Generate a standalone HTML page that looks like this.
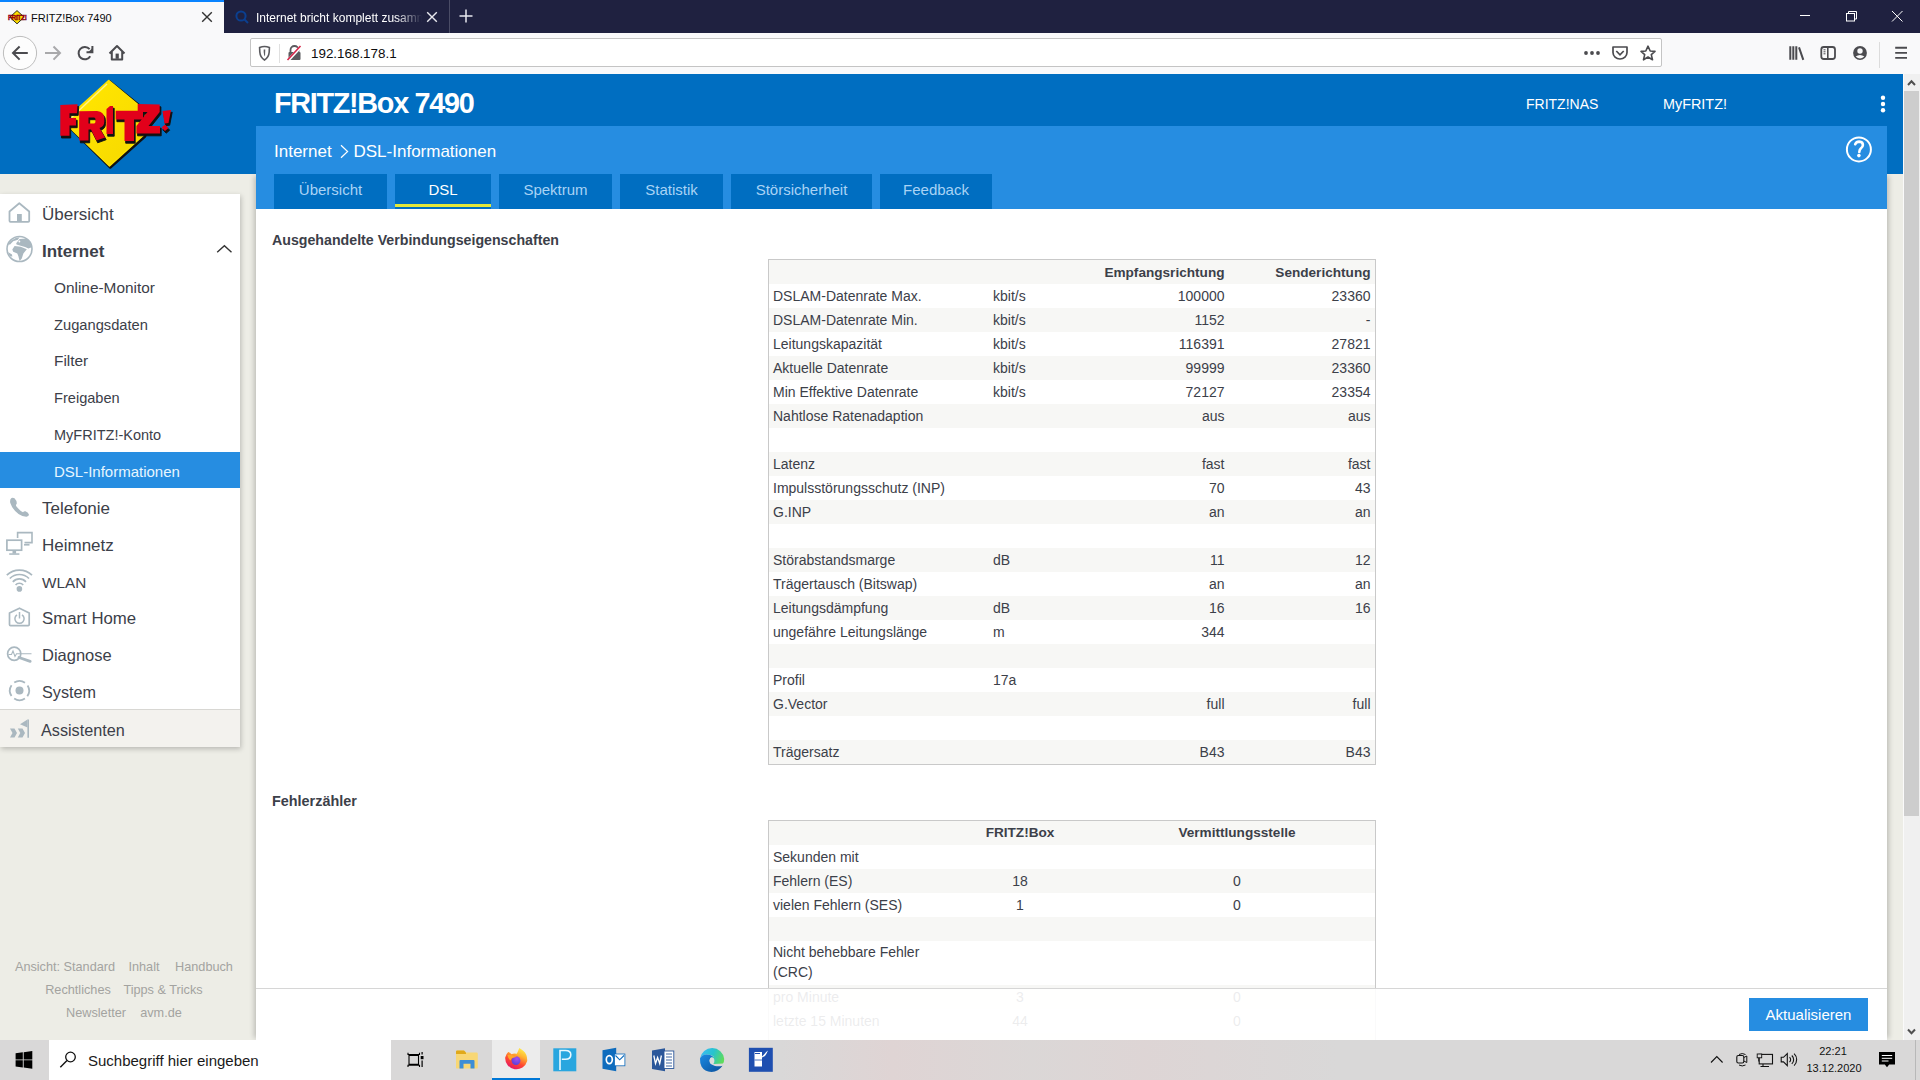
<!DOCTYPE html>
<html><head><meta charset="utf-8"><title>FRITZ!Box 7490</title>
<style>
html,body{margin:0;padding:0;width:1920px;height:1080px;overflow:hidden;background:#fff;font-family:"Liberation Sans", sans-serif;}
div{box-sizing:content-box}
</style></head><body>
<div style="position:absolute;left:0px;top:0px;width:1920px;height:33px;background:#1f2140"></div><div style="position:absolute;left:0px;top:0px;width:224px;height:33px;background:#f9f9fa"></div><div style="position:absolute;left:0px;top:0px;width:224px;height:2px;background:#0a84ff"></div><div style="position:absolute;left:31px;top:12.69px;font-size:11px;line-height:11px;height:11px;color:#0c0c0d;font-weight:400;white-space:nowrap;">FRITZ!Box 7490</div><div style="position:absolute;left:256px;top:11.84px;width:166px;height:14px;overflow:hidden;font-size:12px;line-height:12px;color:#fff;white-space:nowrap;-webkit-mask-image:linear-gradient(to right,#000 140px,transparent 166px)">Internet bricht komplett zusammen</div><div style="position:absolute;left:0px;top:33px;width:1920px;height:41px;background:#f9f9fa"></div><div style="position:absolute;left:250px;top:38px;width:1412px;height:29px;background:#fff;border:1px solid #c4c4c4;border-radius:2px;box-sizing:border-box"></div><div style="position:absolute;left:311px;top:47.46px;font-size:13.4px;line-height:13.4px;height:13.4px;color:#0c0c0d;font-weight:400;white-space:nowrap;">192.168.178.1</div><div style="position:absolute;left:0px;top:74px;width:1903px;height:966px;background:#edede6"></div><div style="position:absolute;left:0px;top:74px;width:1903px;height:100px;background:#006ec1"></div><div style="position:absolute;left:256px;top:174px;width:1631px;height:866px;background:#fff;box-shadow:4px 0 5px -2px rgba(0,0,0,0.2),-4px 0 5px -2px rgba(0,0,0,0.2)"></div><div style="position:absolute;left:256px;top:126px;width:1631px;height:83px;background:#268de1"></div><div style="position:absolute;left:274px;top:89.42px;font-size:28.8px;line-height:28.8px;height:28.8px;color:#fff;font-weight:700;white-space:nowrap;letter-spacing:-1.3px">FRITZ!Box 7490</div><div style="position:absolute;left:274px;top:142.61px;font-size:17px;line-height:17px;height:17px;color:#fff;font-weight:400;white-space:nowrap;">Internet</div><svg style="position:absolute;left:338px;top:142px;" width="14" height="20" viewBox="338 142 14 20"><path d="M341 145.2 L347.6 151.5 L341 157.8" fill="none" stroke="#fff" stroke-width="1.2"/></svg><div style="position:absolute;left:353.5px;top:142.61px;font-size:17px;line-height:17px;height:17px;color:#fff;font-weight:400;white-space:nowrap;">DSL-Informationen</div><div style="position:absolute;left:1526px;top:97.15px;font-size:14px;line-height:14px;height:14px;color:#fff;font-weight:400;white-space:nowrap;">FRITZ!NAS</div><div style="position:absolute;left:1663px;top:96.81px;font-size:14.4px;line-height:14.4px;height:14.4px;color:#fff;font-weight:400;white-space:nowrap;">MyFRITZ!</div><div style="position:absolute;left:274px;top:174px;width:113px;height:35px;background:#006ec1"></div><div style="position:absolute;left:274.0px;width:113px;text-align:center;top:182.30px;font-size:15px;line-height:15px;height:15px;color:#a9d3f5;font-weight:400;white-space:nowrap;">Übersicht</div><div style="position:absolute;left:395px;top:174px;width:96px;height:35px;background:#006ec1"></div><div style="position:absolute;left:395.0px;width:96px;text-align:center;top:182.30px;font-size:15px;line-height:15px;height:15px;color:#fff;font-weight:400;white-space:nowrap;">DSL</div><div style="position:absolute;left:499px;top:174px;width:113px;height:35px;background:#006ec1"></div><div style="position:absolute;left:499.0px;width:113px;text-align:center;top:182.30px;font-size:15px;line-height:15px;height:15px;color:#a9d3f5;font-weight:400;white-space:nowrap;">Spektrum</div><div style="position:absolute;left:620px;top:174px;width:103px;height:35px;background:#006ec1"></div><div style="position:absolute;left:620.0px;width:103px;text-align:center;top:182.30px;font-size:15px;line-height:15px;height:15px;color:#a9d3f5;font-weight:400;white-space:nowrap;">Statistik</div><div style="position:absolute;left:731px;top:174px;width:141px;height:35px;background:#006ec1"></div><div style="position:absolute;left:731.0px;width:141px;text-align:center;top:182.30px;font-size:15px;line-height:15px;height:15px;color:#a9d3f5;font-weight:400;white-space:nowrap;">Störsicherheit</div><div style="position:absolute;left:880px;top:174px;width:112px;height:35px;background:#006ec1"></div><div style="position:absolute;left:880.0px;width:112px;text-align:center;top:182.30px;font-size:15px;line-height:15px;height:15px;color:#a9d3f5;font-weight:400;white-space:nowrap;">Feedback</div><div style="position:absolute;left:395px;top:204px;width:96px;height:3px;background:#e2e83a"></div><div style="position:absolute;left:0px;top:194px;width:240px;height:553px;background:#fff;box-shadow:1px 2px 5px rgba(0,0,0,0.22)"></div><div style="position:absolute;left:0px;top:709px;width:240px;height:38px;background:#f3f2ee;border-top:1px solid #d8d7d3;box-sizing:border-box"></div><div style="position:absolute;left:0px;top:452px;width:240px;height:36px;background:#268de1"></div><div style="position:absolute;left:42px;top:205.61px;font-size:17px;line-height:17px;height:17px;color:#3c4049;font-weight:400;white-space:nowrap;">Übersicht</div><div style="position:absolute;left:42px;top:242.61px;font-size:17px;line-height:17px;height:17px;color:#3c4049;font-weight:700;white-space:nowrap;">Internet</div><div style="position:absolute;left:54px;top:279.96px;font-size:15.4px;line-height:15.4px;height:15.4px;color:#3c4049;font-weight:400;white-space:nowrap;">Online-Monitor</div><div style="position:absolute;left:54px;top:317.56px;font-size:14.7px;line-height:14.7px;height:14.7px;color:#3c4049;font-weight:400;white-space:nowrap;">Zugangsdaten</div><div style="position:absolute;left:54px;top:352.96px;font-size:15.4px;line-height:15.4px;height:15.4px;color:#3c4049;font-weight:400;white-space:nowrap;">Filter</div><div style="position:absolute;left:54px;top:390.64px;font-size:14.6px;line-height:14.6px;height:14.6px;color:#3c4049;font-weight:400;white-space:nowrap;">Freigaben</div><div style="position:absolute;left:54px;top:427.73px;font-size:14.5px;line-height:14.5px;height:14.5px;color:#3c4049;font-weight:400;white-space:nowrap;">MyFRITZ!-Konto</div><div style="position:absolute;left:54px;top:464.30px;font-size:15px;line-height:15px;height:15px;color:#e6f6ff;font-weight:400;white-space:nowrap;">DSL-Informationen</div><div style="position:absolute;left:42px;top:499.61px;font-size:17px;line-height:17px;height:17px;color:#3c4049;font-weight:400;white-space:nowrap;">Telefonie</div><div style="position:absolute;left:42px;top:536.61px;font-size:17px;line-height:17px;height:17px;color:#3c4049;font-weight:400;white-space:nowrap;">Heimnetz</div><div style="position:absolute;left:42px;top:575.05px;font-size:15.3px;line-height:15.3px;height:15.3px;color:#3c4049;font-weight:400;white-space:nowrap;">WLAN</div><div style="position:absolute;left:42px;top:610.78px;font-size:16.8px;line-height:16.8px;height:16.8px;color:#3c4049;font-weight:400;white-space:nowrap;">Smart Home</div><div style="position:absolute;left:42px;top:647.03px;font-size:16.5px;line-height:16.5px;height:16.5px;color:#3c4049;font-weight:400;white-space:nowrap;">Diagnose</div><div style="position:absolute;left:42px;top:684.29px;font-size:16.2px;line-height:16.2px;height:16.2px;color:#3c4049;font-weight:400;white-space:nowrap;">System</div><div style="position:absolute;left:41px;top:722.29px;font-size:16.2px;line-height:16.2px;height:16.2px;color:#3c4049;font-weight:400;white-space:nowrap;">Assistenten</div><div style="position:absolute;left:272px;top:232.98px;font-size:14.2px;line-height:14.2px;height:14.2px;color:#3c4049;font-weight:700;white-space:nowrap;">Ausgehandelte Verbindungseigenschaften</div><div style="position:absolute;left:272px;top:793.81px;font-size:14.4px;line-height:14.4px;height:14.4px;color:#3c4049;font-weight:700;white-space:nowrap;">Fehlerzähler</div><div style="position:absolute;left:768px;top:259px;width:608px;height:506px;border:1px solid #c9c9c9;box-sizing:border-box"></div><div style="position:absolute;left:769px;top:260px;width:606px;height:24px;background:#f7f7f5"></div><div style="position:absolute;right:695.5px;text-align:right;top:266.29px;font-size:13.6px;line-height:13.6px;height:13.6px;color:#3c4049;font-weight:700;white-space:nowrap;">Empfangsrichtung</div><div style="position:absolute;right:549.5px;text-align:right;top:266.29px;font-size:13.6px;line-height:13.6px;height:13.6px;color:#3c4049;font-weight:700;white-space:nowrap;">Senderichtung</div><div style="position:absolute;left:773px;top:289.15px;font-size:14px;line-height:14px;height:14px;color:#3c4049;font-weight:400;white-space:nowrap;">DSLAM-Datenrate Max.</div><div style="position:absolute;left:993px;top:289.15px;font-size:14px;line-height:14px;height:14px;color:#3c4049;font-weight:400;white-space:nowrap;">kbit/s</div><div style="position:absolute;right:695.5px;text-align:right;top:289.15px;font-size:14px;line-height:14px;height:14px;color:#3c4049;font-weight:400;white-space:nowrap;">100000</div><div style="position:absolute;right:549.5px;text-align:right;top:289.15px;font-size:14px;line-height:14px;height:14px;color:#3c4049;font-weight:400;white-space:nowrap;">23360</div><div style="position:absolute;left:769px;top:308px;width:606px;height:24px;background:#f7f7f5"></div><div style="position:absolute;left:773px;top:313.15px;font-size:14px;line-height:14px;height:14px;color:#3c4049;font-weight:400;white-space:nowrap;">DSLAM-Datenrate Min.</div><div style="position:absolute;left:993px;top:313.15px;font-size:14px;line-height:14px;height:14px;color:#3c4049;font-weight:400;white-space:nowrap;">kbit/s</div><div style="position:absolute;right:695.5px;text-align:right;top:313.15px;font-size:14px;line-height:14px;height:14px;color:#3c4049;font-weight:400;white-space:nowrap;">1152</div><div style="position:absolute;right:549.5px;text-align:right;top:313.15px;font-size:14px;line-height:14px;height:14px;color:#3c4049;font-weight:400;white-space:nowrap;">-</div><div style="position:absolute;left:773px;top:337.15px;font-size:14px;line-height:14px;height:14px;color:#3c4049;font-weight:400;white-space:nowrap;">Leitungskapazität</div><div style="position:absolute;left:993px;top:337.15px;font-size:14px;line-height:14px;height:14px;color:#3c4049;font-weight:400;white-space:nowrap;">kbit/s</div><div style="position:absolute;right:695.5px;text-align:right;top:337.15px;font-size:14px;line-height:14px;height:14px;color:#3c4049;font-weight:400;white-space:nowrap;">116391</div><div style="position:absolute;right:549.5px;text-align:right;top:337.15px;font-size:14px;line-height:14px;height:14px;color:#3c4049;font-weight:400;white-space:nowrap;">27821</div><div style="position:absolute;left:769px;top:356px;width:606px;height:24px;background:#f7f7f5"></div><div style="position:absolute;left:773px;top:361.15px;font-size:14px;line-height:14px;height:14px;color:#3c4049;font-weight:400;white-space:nowrap;">Aktuelle Datenrate</div><div style="position:absolute;left:993px;top:361.15px;font-size:14px;line-height:14px;height:14px;color:#3c4049;font-weight:400;white-space:nowrap;">kbit/s</div><div style="position:absolute;right:695.5px;text-align:right;top:361.15px;font-size:14px;line-height:14px;height:14px;color:#3c4049;font-weight:400;white-space:nowrap;">99999</div><div style="position:absolute;right:549.5px;text-align:right;top:361.15px;font-size:14px;line-height:14px;height:14px;color:#3c4049;font-weight:400;white-space:nowrap;">23360</div><div style="position:absolute;left:773px;top:385.15px;font-size:14px;line-height:14px;height:14px;color:#3c4049;font-weight:400;white-space:nowrap;">Min Effektive Datenrate</div><div style="position:absolute;left:993px;top:385.15px;font-size:14px;line-height:14px;height:14px;color:#3c4049;font-weight:400;white-space:nowrap;">kbit/s</div><div style="position:absolute;right:695.5px;text-align:right;top:385.15px;font-size:14px;line-height:14px;height:14px;color:#3c4049;font-weight:400;white-space:nowrap;">72127</div><div style="position:absolute;right:549.5px;text-align:right;top:385.15px;font-size:14px;line-height:14px;height:14px;color:#3c4049;font-weight:400;white-space:nowrap;">23354</div><div style="position:absolute;left:769px;top:404px;width:606px;height:24px;background:#f7f7f5"></div><div style="position:absolute;left:773px;top:409.15px;font-size:14px;line-height:14px;height:14px;color:#3c4049;font-weight:400;white-space:nowrap;">Nahtlose Ratenadaption</div><div style="position:absolute;left:993px;top:409.15px;font-size:14px;line-height:14px;height:14px;color:#3c4049;font-weight:400;white-space:nowrap;"></div><div style="position:absolute;right:695.5px;text-align:right;top:409.15px;font-size:14px;line-height:14px;height:14px;color:#3c4049;font-weight:400;white-space:nowrap;">aus</div><div style="position:absolute;right:549.5px;text-align:right;top:409.15px;font-size:14px;line-height:14px;height:14px;color:#3c4049;font-weight:400;white-space:nowrap;">aus</div><div style="position:absolute;left:773px;top:433.15px;font-size:14px;line-height:14px;height:14px;color:#3c4049;font-weight:400;white-space:nowrap;"></div><div style="position:absolute;left:993px;top:433.15px;font-size:14px;line-height:14px;height:14px;color:#3c4049;font-weight:400;white-space:nowrap;"></div><div style="position:absolute;right:695.5px;text-align:right;top:433.15px;font-size:14px;line-height:14px;height:14px;color:#3c4049;font-weight:400;white-space:nowrap;"></div><div style="position:absolute;right:549.5px;text-align:right;top:433.15px;font-size:14px;line-height:14px;height:14px;color:#3c4049;font-weight:400;white-space:nowrap;"></div><div style="position:absolute;left:769px;top:452px;width:606px;height:24px;background:#f7f7f5"></div><div style="position:absolute;left:773px;top:457.15px;font-size:14px;line-height:14px;height:14px;color:#3c4049;font-weight:400;white-space:nowrap;">Latenz</div><div style="position:absolute;left:993px;top:457.15px;font-size:14px;line-height:14px;height:14px;color:#3c4049;font-weight:400;white-space:nowrap;"></div><div style="position:absolute;right:695.5px;text-align:right;top:457.15px;font-size:14px;line-height:14px;height:14px;color:#3c4049;font-weight:400;white-space:nowrap;">fast</div><div style="position:absolute;right:549.5px;text-align:right;top:457.15px;font-size:14px;line-height:14px;height:14px;color:#3c4049;font-weight:400;white-space:nowrap;">fast</div><div style="position:absolute;left:773px;top:481.15px;font-size:14px;line-height:14px;height:14px;color:#3c4049;font-weight:400;white-space:nowrap;">Impulsstörungsschutz (INP)</div><div style="position:absolute;left:993px;top:481.15px;font-size:14px;line-height:14px;height:14px;color:#3c4049;font-weight:400;white-space:nowrap;"></div><div style="position:absolute;right:695.5px;text-align:right;top:481.15px;font-size:14px;line-height:14px;height:14px;color:#3c4049;font-weight:400;white-space:nowrap;">70</div><div style="position:absolute;right:549.5px;text-align:right;top:481.15px;font-size:14px;line-height:14px;height:14px;color:#3c4049;font-weight:400;white-space:nowrap;">43</div><div style="position:absolute;left:769px;top:500px;width:606px;height:24px;background:#f7f7f5"></div><div style="position:absolute;left:773px;top:505.15px;font-size:14px;line-height:14px;height:14px;color:#3c4049;font-weight:400;white-space:nowrap;">G.INP</div><div style="position:absolute;left:993px;top:505.15px;font-size:14px;line-height:14px;height:14px;color:#3c4049;font-weight:400;white-space:nowrap;"></div><div style="position:absolute;right:695.5px;text-align:right;top:505.15px;font-size:14px;line-height:14px;height:14px;color:#3c4049;font-weight:400;white-space:nowrap;">an</div><div style="position:absolute;right:549.5px;text-align:right;top:505.15px;font-size:14px;line-height:14px;height:14px;color:#3c4049;font-weight:400;white-space:nowrap;">an</div><div style="position:absolute;left:773px;top:529.15px;font-size:14px;line-height:14px;height:14px;color:#3c4049;font-weight:400;white-space:nowrap;"></div><div style="position:absolute;left:993px;top:529.15px;font-size:14px;line-height:14px;height:14px;color:#3c4049;font-weight:400;white-space:nowrap;"></div><div style="position:absolute;right:695.5px;text-align:right;top:529.15px;font-size:14px;line-height:14px;height:14px;color:#3c4049;font-weight:400;white-space:nowrap;"></div><div style="position:absolute;right:549.5px;text-align:right;top:529.15px;font-size:14px;line-height:14px;height:14px;color:#3c4049;font-weight:400;white-space:nowrap;"></div><div style="position:absolute;left:769px;top:548px;width:606px;height:24px;background:#f7f7f5"></div><div style="position:absolute;left:773px;top:553.15px;font-size:14px;line-height:14px;height:14px;color:#3c4049;font-weight:400;white-space:nowrap;">Störabstandsmarge</div><div style="position:absolute;left:993px;top:553.15px;font-size:14px;line-height:14px;height:14px;color:#3c4049;font-weight:400;white-space:nowrap;">dB</div><div style="position:absolute;right:695.5px;text-align:right;top:553.15px;font-size:14px;line-height:14px;height:14px;color:#3c4049;font-weight:400;white-space:nowrap;">11</div><div style="position:absolute;right:549.5px;text-align:right;top:553.15px;font-size:14px;line-height:14px;height:14px;color:#3c4049;font-weight:400;white-space:nowrap;">12</div><div style="position:absolute;left:773px;top:577.15px;font-size:14px;line-height:14px;height:14px;color:#3c4049;font-weight:400;white-space:nowrap;">Trägertausch (Bitswap)</div><div style="position:absolute;left:993px;top:577.15px;font-size:14px;line-height:14px;height:14px;color:#3c4049;font-weight:400;white-space:nowrap;"></div><div style="position:absolute;right:695.5px;text-align:right;top:577.15px;font-size:14px;line-height:14px;height:14px;color:#3c4049;font-weight:400;white-space:nowrap;">an</div><div style="position:absolute;right:549.5px;text-align:right;top:577.15px;font-size:14px;line-height:14px;height:14px;color:#3c4049;font-weight:400;white-space:nowrap;">an</div><div style="position:absolute;left:769px;top:596px;width:606px;height:24px;background:#f7f7f5"></div><div style="position:absolute;left:773px;top:601.15px;font-size:14px;line-height:14px;height:14px;color:#3c4049;font-weight:400;white-space:nowrap;">Leitungsdämpfung</div><div style="position:absolute;left:993px;top:601.15px;font-size:14px;line-height:14px;height:14px;color:#3c4049;font-weight:400;white-space:nowrap;">dB</div><div style="position:absolute;right:695.5px;text-align:right;top:601.15px;font-size:14px;line-height:14px;height:14px;color:#3c4049;font-weight:400;white-space:nowrap;">16</div><div style="position:absolute;right:549.5px;text-align:right;top:601.15px;font-size:14px;line-height:14px;height:14px;color:#3c4049;font-weight:400;white-space:nowrap;">16</div><div style="position:absolute;left:773px;top:625.15px;font-size:14px;line-height:14px;height:14px;color:#3c4049;font-weight:400;white-space:nowrap;">ungefähre Leitungslänge</div><div style="position:absolute;left:993px;top:625.15px;font-size:14px;line-height:14px;height:14px;color:#3c4049;font-weight:400;white-space:nowrap;">m</div><div style="position:absolute;right:695.5px;text-align:right;top:625.15px;font-size:14px;line-height:14px;height:14px;color:#3c4049;font-weight:400;white-space:nowrap;">344</div><div style="position:absolute;right:549.5px;text-align:right;top:625.15px;font-size:14px;line-height:14px;height:14px;color:#3c4049;font-weight:400;white-space:nowrap;"></div><div style="position:absolute;left:769px;top:644px;width:606px;height:24px;background:#f7f7f5"></div><div style="position:absolute;left:773px;top:649.15px;font-size:14px;line-height:14px;height:14px;color:#3c4049;font-weight:400;white-space:nowrap;"></div><div style="position:absolute;left:993px;top:649.15px;font-size:14px;line-height:14px;height:14px;color:#3c4049;font-weight:400;white-space:nowrap;"></div><div style="position:absolute;right:695.5px;text-align:right;top:649.15px;font-size:14px;line-height:14px;height:14px;color:#3c4049;font-weight:400;white-space:nowrap;"></div><div style="position:absolute;right:549.5px;text-align:right;top:649.15px;font-size:14px;line-height:14px;height:14px;color:#3c4049;font-weight:400;white-space:nowrap;"></div><div style="position:absolute;left:773px;top:673.15px;font-size:14px;line-height:14px;height:14px;color:#3c4049;font-weight:400;white-space:nowrap;">Profil</div><div style="position:absolute;left:993px;top:673.15px;font-size:14px;line-height:14px;height:14px;color:#3c4049;font-weight:400;white-space:nowrap;">17a</div><div style="position:absolute;right:695.5px;text-align:right;top:673.15px;font-size:14px;line-height:14px;height:14px;color:#3c4049;font-weight:400;white-space:nowrap;"></div><div style="position:absolute;right:549.5px;text-align:right;top:673.15px;font-size:14px;line-height:14px;height:14px;color:#3c4049;font-weight:400;white-space:nowrap;"></div><div style="position:absolute;left:769px;top:692px;width:606px;height:24px;background:#f7f7f5"></div><div style="position:absolute;left:773px;top:697.15px;font-size:14px;line-height:14px;height:14px;color:#3c4049;font-weight:400;white-space:nowrap;">G.Vector</div><div style="position:absolute;left:993px;top:697.15px;font-size:14px;line-height:14px;height:14px;color:#3c4049;font-weight:400;white-space:nowrap;"></div><div style="position:absolute;right:695.5px;text-align:right;top:697.15px;font-size:14px;line-height:14px;height:14px;color:#3c4049;font-weight:400;white-space:nowrap;">full</div><div style="position:absolute;right:549.5px;text-align:right;top:697.15px;font-size:14px;line-height:14px;height:14px;color:#3c4049;font-weight:400;white-space:nowrap;">full</div><div style="position:absolute;left:773px;top:721.15px;font-size:14px;line-height:14px;height:14px;color:#3c4049;font-weight:400;white-space:nowrap;"></div><div style="position:absolute;left:993px;top:721.15px;font-size:14px;line-height:14px;height:14px;color:#3c4049;font-weight:400;white-space:nowrap;"></div><div style="position:absolute;right:695.5px;text-align:right;top:721.15px;font-size:14px;line-height:14px;height:14px;color:#3c4049;font-weight:400;white-space:nowrap;"></div><div style="position:absolute;right:549.5px;text-align:right;top:721.15px;font-size:14px;line-height:14px;height:14px;color:#3c4049;font-weight:400;white-space:nowrap;"></div><div style="position:absolute;left:769px;top:740px;width:606px;height:24px;background:#f7f7f5"></div><div style="position:absolute;left:773px;top:745.15px;font-size:14px;line-height:14px;height:14px;color:#3c4049;font-weight:400;white-space:nowrap;">Trägersatz</div><div style="position:absolute;left:993px;top:745.15px;font-size:14px;line-height:14px;height:14px;color:#3c4049;font-weight:400;white-space:nowrap;"></div><div style="position:absolute;right:695.5px;text-align:right;top:745.15px;font-size:14px;line-height:14px;height:14px;color:#3c4049;font-weight:400;white-space:nowrap;">B43</div><div style="position:absolute;right:549.5px;text-align:right;top:745.15px;font-size:14px;line-height:14px;height:14px;color:#3c4049;font-weight:400;white-space:nowrap;">B43</div><div style="position:absolute;left:768px;top:820px;width:608px;height:240px;border:1px solid #c9c9c9;box-sizing:border-box"></div><div style="position:absolute;left:769px;top:821px;width:606px;height:24px;background:#f7f7f5"></div><div style="position:absolute;left:920.0px;width:200px;text-align:center;top:826.49px;font-size:13.6px;line-height:13.6px;height:13.6px;color:#3c4049;font-weight:700;white-space:nowrap;">FRITZ!Box</div><div style="position:absolute;left:1137.0px;width:200px;text-align:center;top:826.49px;font-size:13.6px;line-height:13.6px;height:13.6px;color:#3c4049;font-weight:700;white-space:nowrap;">Vermittlungsstelle</div><div style="position:absolute;left:773px;top:850.15px;font-size:14px;line-height:14px;height:14px;color:#3c4049;font-weight:400;white-space:nowrap;">Sekunden mit</div><div style="position:absolute;left:970.0px;width:100px;text-align:center;top:850.15px;font-size:14px;line-height:14px;height:14px;color:#3c4049;font-weight:400;white-space:nowrap;"></div><div style="position:absolute;left:1187.0px;width:100px;text-align:center;top:850.15px;font-size:14px;line-height:14px;height:14px;color:#3c4049;font-weight:400;white-space:nowrap;"></div><div style="position:absolute;left:769px;top:869px;width:606px;height:24px;background:#f7f7f5"></div><div style="position:absolute;left:773px;top:874.15px;font-size:14px;line-height:14px;height:14px;color:#3c4049;font-weight:400;white-space:nowrap;">Fehlern (ES)</div><div style="position:absolute;left:970.0px;width:100px;text-align:center;top:874.15px;font-size:14px;line-height:14px;height:14px;color:#3c4049;font-weight:400;white-space:nowrap;">18</div><div style="position:absolute;left:1187.0px;width:100px;text-align:center;top:874.15px;font-size:14px;line-height:14px;height:14px;color:#3c4049;font-weight:400;white-space:nowrap;">0</div><div style="position:absolute;left:773px;top:898.15px;font-size:14px;line-height:14px;height:14px;color:#3c4049;font-weight:400;white-space:nowrap;">vielen Fehlern (SES)</div><div style="position:absolute;left:970.0px;width:100px;text-align:center;top:898.15px;font-size:14px;line-height:14px;height:14px;color:#3c4049;font-weight:400;white-space:nowrap;">1</div><div style="position:absolute;left:1187.0px;width:100px;text-align:center;top:898.15px;font-size:14px;line-height:14px;height:14px;color:#3c4049;font-weight:400;white-space:nowrap;">0</div><div style="position:absolute;left:769px;top:917px;width:606px;height:24px;background:#f7f7f5"></div><div style="position:absolute;left:773px;top:922.15px;font-size:14px;line-height:14px;height:14px;color:#3c4049;font-weight:400;white-space:nowrap;"></div><div style="position:absolute;left:970.0px;width:100px;text-align:center;top:922.15px;font-size:14px;line-height:14px;height:14px;color:#3c4049;font-weight:400;white-space:nowrap;"></div><div style="position:absolute;left:1187.0px;width:100px;text-align:center;top:922.15px;font-size:14px;line-height:14px;height:14px;color:#3c4049;font-weight:400;white-space:nowrap;"></div><div style="position:absolute;left:773px;top:942.2px;font-size:14px;line-height:20px;color:#3c4049">Nicht behebbare Fehler<br>(CRC)</div><div style="position:absolute;left:970.0px;width:100px;text-align:center;top:946.15px;font-size:14px;line-height:14px;height:14px;color:#3c4049;font-weight:400;white-space:nowrap;"></div><div style="position:absolute;left:1187.0px;width:100px;text-align:center;top:946.15px;font-size:14px;line-height:14px;height:14px;color:#3c4049;font-weight:400;white-space:nowrap;"></div><div style="position:absolute;left:769px;top:985px;width:606px;height:24px;background:#f7f7f5"></div><div style="position:absolute;left:773px;top:990.15px;font-size:14px;line-height:14px;height:14px;color:#3c4049;font-weight:400;white-space:nowrap;">pro Minute</div><div style="position:absolute;left:970.0px;width:100px;text-align:center;top:990.15px;font-size:14px;line-height:14px;height:14px;color:#3c4049;font-weight:400;white-space:nowrap;">3</div><div style="position:absolute;left:1187.0px;width:100px;text-align:center;top:990.15px;font-size:14px;line-height:14px;height:14px;color:#3c4049;font-weight:400;white-space:nowrap;">0</div><div style="position:absolute;left:773px;top:1014.15px;font-size:14px;line-height:14px;height:14px;color:#3c4049;font-weight:400;white-space:nowrap;">letzte 15 Minuten</div><div style="position:absolute;left:970.0px;width:100px;text-align:center;top:1014.15px;font-size:14px;line-height:14px;height:14px;color:#3c4049;font-weight:400;white-space:nowrap;">44</div><div style="position:absolute;left:1187.0px;width:100px;text-align:center;top:1014.15px;font-size:14px;line-height:14px;height:14px;color:#3c4049;font-weight:400;white-space:nowrap;">0</div><div style="position:absolute;left:769px;top:1033px;width:606px;height:24px;background:#f7f7f5"></div><div style="position:absolute;left:773px;top:1038.15px;font-size:14px;line-height:14px;height:14px;color:#3c4049;font-weight:400;white-space:nowrap;"></div><div style="position:absolute;left:970.0px;width:100px;text-align:center;top:1038.15px;font-size:14px;line-height:14px;height:14px;color:#3c4049;font-weight:400;white-space:nowrap;"></div><div style="position:absolute;left:1187.0px;width:100px;text-align:center;top:1038.15px;font-size:14px;line-height:14px;height:14px;color:#3c4049;font-weight:400;white-space:nowrap;"></div><div style="position:absolute;left:256px;top:988px;width:1631px;height:52px;background:rgba(255,255,255,0.9);border-top:1px solid #d6d6d6;box-sizing:border-box"></div><div style="position:absolute;left:1749px;top:998px;width:119px;height:33px;background:#268de1"></div><div style="position:absolute;left:1749.0px;width:119px;text-align:center;top:1007.30px;font-size:15px;line-height:15px;height:15px;color:#fff;font-weight:400;white-space:nowrap;">Aktualisieren</div><div style="position:absolute;left:-35.0px;width:200px;text-align:center;top:960.95px;font-size:12.7px;line-height:12.7px;height:12.7px;color:#a3a3a0;font-weight:400;white-space:nowrap;">Ansicht: Standard</div><div style="position:absolute;left:104.0px;width:80px;text-align:center;top:960.95px;font-size:12.7px;line-height:12.7px;height:12.7px;color:#a3a3a0;font-weight:400;white-space:nowrap;">Inhalt</div><div style="position:absolute;left:154.0px;width:100px;text-align:center;top:960.95px;font-size:12.7px;line-height:12.7px;height:12.7px;color:#a3a3a0;font-weight:400;white-space:nowrap;">Handbuch</div><div style="position:absolute;left:28.0px;width:100px;text-align:center;top:983.95px;font-size:12.7px;line-height:12.7px;height:12.7px;color:#a3a3a0;font-weight:400;white-space:nowrap;">Rechtliches</div><div style="position:absolute;left:113.0px;width:100px;text-align:center;top:983.95px;font-size:12.7px;line-height:12.7px;height:12.7px;color:#a3a3a0;font-weight:400;white-space:nowrap;">Tipps &amp; Tricks</div><div style="position:absolute;left:46.0px;width:100px;text-align:center;top:1006.95px;font-size:12.7px;line-height:12.7px;height:12.7px;color:#a3a3a0;font-weight:400;white-space:nowrap;">Newsletter</div><div style="position:absolute;left:111.0px;width:100px;text-align:center;top:1006.95px;font-size:12.7px;line-height:12.7px;height:12.7px;color:#a3a3a0;font-weight:400;white-space:nowrap;">avm.de</div><div style="position:absolute;left:1903px;top:74px;width:17px;height:966px;background:#f0f0f0;border-left:1px solid #fafafa;box-sizing:border-box"></div><div style="position:absolute;left:1904px;top:91px;width:15px;height:725px;background:#cdcdcd"></div><div style="position:absolute;left:0px;top:1040px;width:1920px;height:40px;background:#d9d8d8"></div><div style="position:absolute;left:780px;top:1040px;width:560px;height:40px;background:linear-gradient(to right,rgba(232,208,208,0) 0%,rgba(232,206,206,0.4) 20%,rgba(225,212,210,0.25) 45%,rgba(232,206,206,0.3) 65%,rgba(232,208,208,0) 100%)"></div><div style="position:absolute;left:49px;top:1040px;width:342px;height:40px;background:#fff"></div><div style="position:absolute;left:88px;top:1053.30px;font-size:15px;line-height:15px;height:15px;color:#1a1a1a;font-weight:400;white-space:nowrap;">Suchbegriff hier eingeben</div><div style="position:absolute;left:1793.0px;width:80px;text-align:center;top:1046.19px;font-size:11px;line-height:11px;height:11px;color:#111;font-weight:400;white-space:nowrap;">22:21</div><div style="position:absolute;left:1794.0px;width:80px;text-align:center;top:1063.19px;font-size:11px;line-height:11px;height:11px;color:#111;font-weight:400;white-space:nowrap;">13.12.2020</div><svg style="position:absolute;left:6px;top:8px;" width="22" height="18" viewBox="6 8 22 18"><path d="M17 10.6 L24.2 17.2 L17 23.8 L9.8 17.2 Z" fill="#ffe100" stroke="#1a1a1a" stroke-width="0.9"/><text x="17.2" y="19.6" font-size="6.6" font-weight="700" fill="#e2001a" stroke="#5a0008" stroke-width="0.35" text-anchor="middle" font-family="Liberation Sans" letter-spacing="-0.4">FRITZ!</text></svg><svg style="position:absolute;left:200px;top:10px;" width="14" height="14" viewBox="200 10 14 14"><path d="M202.2 12.2 L211.8 21.8 M211.8 12.2 L202.2 21.8" stroke="#333" stroke-width="1.4"/></svg><svg style="position:absolute;left:233px;top:9px;" width="18" height="16" viewBox="233 9 18 16"><circle cx="241" cy="16" r="4.6" fill="none" stroke="#0b3f8f" stroke-width="2"/><path d="M244.5 19.5 L248 23" stroke="#0b3f8f" stroke-width="2"/></svg><svg style="position:absolute;left:425px;top:10px;" width="14" height="14" viewBox="425 10 14 14"><path d="M427.2 12.2 L436.8 21.8 M436.8 12.2 L427.2 21.8" stroke="#e8e8ee" stroke-width="1.4"/></svg><div style="position:absolute;left:449px;top:0px;width:1px;height:33px;background:#4a4c66"></div><svg style="position:absolute;left:456px;top:6px;" width="20" height="20" viewBox="456 6 20 20"><path d="M466 9.5 V22.5 M459.5 16 H472.5" stroke="#e8e8ee" stroke-width="1.5"/></svg><svg style="position:absolute;left:1796px;top:5px;" width="120" height="22" viewBox="1796 5 120 22"><path d="M1800 15.5 H1810" stroke="#fff" stroke-width="1"/><rect x="1846.5" y="13.5" width="8" height="7.5" fill="none" stroke="#fff" stroke-width="1"/><path d="M1848.5 13.5 V11.5 H1856.5 V19 H1854.5" fill="none" stroke="#fff" stroke-width="1"/><path d="M1892 11 L1902.5 21.5 M1902.5 11 L1892 21.5" stroke="#fff" stroke-width="1"/></svg><svg style="position:absolute;left:0px;top:34px;" width="140" height="38" viewBox="0 34 140 38"><circle cx="20" cy="53" r="16.6" fill="#fdfdfd" stroke="#b5b5b5" stroke-width="0.9"/><path d="M27.8 53 H13 M19.6 46.5 L13 53 L19.6 59.6" fill="none" stroke="#4b4b4f" stroke-width="2"/><path d="M45 53 H60 M53.5 46.5 L60 53 L53.5 59.6" fill="none" stroke="#a9a9ab" stroke-width="2"/><path d="M90.2 56.2 A6.2 6.2 0 1 1 89.6 49.2" fill="none" stroke="#4b4b4f" stroke-width="2"/><path d="M92.4 46 V52.2 H86.5" fill="none" stroke="#4b4b4f" stroke-width="2"/><path d="M92.4 48 V52.2 H88.2 Z" fill="#4b4b4f"/><path d="M109.5 53.5 L117 46 L124.5 53.5 M111.8 51.5 V59.6 H122.2 V51.5" fill="none" stroke="#4b4b4f" stroke-width="2" stroke-linejoin="round"/><rect x="115.6" y="53.6" width="3.2" height="5.2" fill="#4b4b4f"/></svg><svg style="position:absolute;left:256px;top:44px;" width="50" height="20" viewBox="256 44 50 20"><path d="M259.6 47.5 Q264.5 45.5 269.4 47.5 L269.2 52 Q268.8 57.5 264.5 60 Q260.2 57.5 259.8 52 Z" fill="none" stroke="#5a5a5e" stroke-width="1.6"/><path d="M263.7 49.5 L265.3 49.5 L265 56.5 Q263.8 55 263.7 52 Z" fill="#5a5a5e"/><rect x="279" y="42" width="1" height="21" fill="#e0e0e0"/><path d="M290.5 52 V50 A4 4 0 0 1 298.5 50 V52" fill="none" stroke="#5a5a5e" stroke-width="1.8"/><rect x="288.5" y="52" width="12" height="8" rx="1" fill="#5a5a5e"/><path d="M288 60.5 L301 46.5" stroke="#fff" stroke-width="3"/><path d="M287.5 60 L300.5 46" stroke="#d7264a" stroke-width="1.6"/></svg><svg style="position:absolute;left:1580px;top:44px;" width="80" height="20" viewBox="1580 44 80 20"><circle cx="1586" cy="53" r="1.9" fill="#4b4b4f"/><circle cx="1592" cy="53" r="1.9" fill="#4b4b4f"/><circle cx="1598" cy="53" r="1.9" fill="#4b4b4f"/><path d="M1613 47 H1627 V52.5 A7 6.5 0 0 1 1613 52.5 Z" fill="none" stroke="#4b4b4f" stroke-width="1.7" stroke-linejoin="round"/><path d="M1616.3 51 L1620 54.8 L1623.7 51" fill="none" stroke="#4b4b4f" stroke-width="1.7"/><path d="M1648 46.2 L1650.2 51 L1655 51.4 L1651.3 54.6 L1652.5 59.8 L1648 57 L1643.5 59.8 L1644.7 54.6 L1641 51.4 L1645.8 51 Z" fill="none" stroke="#4b4b4f" stroke-width="1.6" stroke-linejoin="round"/></svg><svg style="position:absolute;left:1784px;top:42px;" width="130" height="26" viewBox="1784 42 130 26"><path d="M1790.3 46.3 V59.8 M1793.3 46.3 V59.8 M1796.3 46.3 V59.8 M1799 47.3 L1803.3 59.8" stroke="#4b4b4f" stroke-width="2"/><rect x="1821.3" y="47" width="13.7" height="12" rx="2.5" fill="none" stroke="#4b4b4f" stroke-width="1.8"/><path d="M1827.8 47 V59" stroke="#4b4b4f" stroke-width="1.6"/><path d="M1823.5 49.8 H1825.5 M1823.5 51.8 H1825.5 M1823.5 53.8 H1825.5" stroke="#4b4b4f" stroke-width="1"/><circle cx="1860" cy="53" r="6.9" fill="#4b4b4f"/><circle cx="1860" cy="51" r="2.7" fill="#f9f9fa"/><path d="M1855.6 56.6 Q1860 53.2 1864.4 56.6 Q1862 58.6 1860 58.6 Q1858 58.6 1855.6 56.6 Z" fill="#f9f9fa"/><rect x="1879" y="36" width="1" height="33" fill="#dcdcdc"/><path d="M1895.2 47.7 H1907 M1895.2 52.9 H1907 M1895.2 57.9 H1907" stroke="#4b4b4f" stroke-width="1.9"/></svg><svg style="position:absolute;left:55px;top:76px;" width="125" height="98" viewBox="55 76 125 98"><defs><linearGradient id="gy" x1="0" y1="0" x2="1" y2="1"><stop offset="0" stop-color="#fff6a0"/><stop offset="0.25" stop-color="#ffe400"/><stop offset="1" stop-color="#f5d800"/></linearGradient></defs><path d="M109.4 81.2 L138.8 105 L145.5 111 L147.5 118 L148.5 128 L145 136.5 L110.3 167.6 L64.3 122.2 Z" fill="#111" stroke="#111" stroke-width="2.4" stroke-linejoin="round"/><path d="M108.6 80.4 L137.5 104.2 L144 110 L146 118 L147 128 L143.5 135.2 L109.5 166 L63.5 121.4 Z" fill="url(#gy)" stroke="#ffe400" stroke-width="1.4" stroke-linejoin="round"/><path d="M70 119 L107 84" stroke="#fff8b0" stroke-width="1.4" opacity="0.8"/><path d="M60.3 105 L77.5 104.2 L77 113.2 L69.5 113.2 L69.5 118 L76 118 L76 125.5 L69.5 125.5 L69.5 135.8 L60.3 135.8 Z" transform="translate(1.2,2.2)" fill="#111" fill-rule="evenodd" stroke="#111" stroke-width="0.9"/><path d="M79.2 111.2 L97 111 Q104.3 111.5 104.3 119 L104.3 121.5 Q104.3 126.5 99.5 128 L105 137.5 L96.5 140.6 L91 129.5 L88.5 129.5 L88.5 140.6 L79.2 140.6 Z M88.5 117.5 L88.5 123.5 L94 123.5 Q95.5 123.5 95.5 121 L95.5 119.5 Q95.5 117.5 94 117.5 Z" transform="translate(1.2,2.2)" fill="#111" fill-rule="evenodd" stroke="#111" stroke-width="0.9"/><path d="M106.5 109 L110 106 L113 106 L113 134 L106.5 134 Z" transform="translate(1.2,2.2)" fill="#111" fill-rule="evenodd" stroke="#111" stroke-width="0.9"/><path d="M115.7 110.7 L143 110.7 L143 119.5 L134 119.5 L134 141 L124.5 141 L124.5 119.5 L115.7 119.5 Z" transform="translate(1.2,2.2)" fill="#111" fill-rule="evenodd" stroke="#111" stroke-width="0.9"/><path d="M137.7 104 L159.7 104.6 L159.7 112 L148.5 126 L160 126 L160 133.6 L136.4 133.6 L136.4 126 L147.5 112 L137.7 112 Z" transform="translate(1.2,2.2)" fill="#111" fill-rule="evenodd" stroke="#111" stroke-width="0.9"/><path d="M162.5 111 L171 110 L168.5 123 L164.5 123.5 Z M161.5 127.5 L165 124.5 L168.5 128 L165 131 Z" transform="translate(1.2,2.2)" fill="#111" fill-rule="evenodd" stroke="#111" stroke-width="0.9"/><path d="M60.3 105 L77.5 104.2 L77 113.2 L69.5 113.2 L69.5 118 L76 118 L76 125.5 L69.5 125.5 L69.5 135.8 L60.3 135.8 Z" fill="#e2001a" fill-rule="evenodd"/><path d="M79.2 111.2 L97 111 Q104.3 111.5 104.3 119 L104.3 121.5 Q104.3 126.5 99.5 128 L105 137.5 L96.5 140.6 L91 129.5 L88.5 129.5 L88.5 140.6 L79.2 140.6 Z M88.5 117.5 L88.5 123.5 L94 123.5 Q95.5 123.5 95.5 121 L95.5 119.5 Q95.5 117.5 94 117.5 Z" fill="#e2001a" fill-rule="evenodd"/><path d="M106.5 109 L110 106 L113 106 L113 134 L106.5 134 Z" fill="#e2001a" fill-rule="evenodd"/><path d="M115.7 110.7 L143 110.7 L143 119.5 L134 119.5 L134 141 L124.5 141 L124.5 119.5 L115.7 119.5 Z" fill="#e2001a" fill-rule="evenodd"/><path d="M137.7 104 L159.7 104.6 L159.7 112 L148.5 126 L160 126 L160 133.6 L136.4 133.6 L136.4 126 L147.5 112 L137.7 112 Z" fill="#e2001a" fill-rule="evenodd"/><path d="M162.5 111 L171 110 L168.5 123 L164.5 123.5 Z M161.5 127.5 L165 124.5 L168.5 128 L165 131 Z" fill="#e2001a" fill-rule="evenodd"/></svg><svg style="position:absolute;left:1876px;top:92px;" width="14" height="24" viewBox="1876 92 14 24"><circle cx="1883" cy="97.8" r="2.2" fill="#fff"/><circle cx="1883" cy="104" r="2.2" fill="#fff"/><circle cx="1883" cy="110.2" r="2.2" fill="#fff"/></svg><svg style="position:absolute;left:1840px;top:132px;" width="38" height="36" viewBox="1840 132 38 36"><circle cx="1858.9" cy="149.4" r="12" fill="none" stroke="#fff" stroke-width="2"/><path d="M1855.2 144.2 Q1856.3 141.6 1859.2 141.6 Q1862.9 141.8 1862.9 145 Q1862.9 147 1860.8 148.5 Q1859.5 149.6 1859.3 152" fill="none" stroke="#fff" stroke-width="2.6" stroke-linecap="round"/><circle cx="1858.9" cy="155.6" r="1.8" fill="#fff"/></svg><svg style="position:absolute;left:4px;top:198px;" width="34" height="70" viewBox="4 198 34 70"><path d="M9.5 211.5 L19.3 203.3 L29.2 211.5 V220.8 Q29.2 221.8 28.2 221.8 H10.5 Q9.5 221.8 9.5 220.8 Z" fill="none" stroke="#aab8c0" stroke-width="1.8" stroke-linejoin="round"/><rect x="17" y="214" width="4.8" height="7.8" fill="#aab8c0"/><circle cx="19.5" cy="249" r="12.5" fill="none" stroke="#aab8c0" stroke-width="1.6"/><path d="M16.2 243.2 L19.6 239 L26.2 238.4 L30.7 242.3 L31.8 247.3 L28.4 248.4 L25.1 247 L20.7 245.7 L16.5 244.6 Z" fill="#aab8c0"/><circle cx="19.4" cy="241.5" r="0.9" fill="#fff"/><path d="M12.3 249.6 L14.6 245.9 L20.7 246.8 L26.8 249.3 L23.4 253.4 L21.8 258.4 L19.6 261 L18.4 256.2 L17.3 253.4 L13.2 251.8 Z" fill="#aab8c0"/><path d="M7.6 244.6 L10.9 240.7 L15.7 238 L19.6 237.2 L17.9 239.8 L13.2 241.2 L10.1 244.6 Z" fill="#aab8c0"/><path d="M7.9 252 L12 254.6 L12.3 256.8 L9.6 255.7 Z" fill="#aab8c0"/></svg><svg style="position:absolute;left:200px;top:236px;" width="40" height="24" viewBox="200 236 40 24"><path d="M217.2 252.2 L224.4 245.7 L231.5 252.2" fill="none" stroke="#333" stroke-width="1.4"/></svg><svg style="position:absolute;left:4px;top:494px;" width="34" height="250" viewBox="4 494 34 250"><path d="M11.5 498 Q9.5 499.5 10.3 503 Q12.5 509.5 18.5 514 Q22.5 516.8 26.5 516.7 Q28.8 516.5 29 514.8 Q28.5 512.5 25.5 511.3 Q24 511 23 512.3 Q19.5 510.5 16.3 506.3 Q15.5 505 16.8 503.5 Q17 501 14.5 498.3 Q13 497.3 11.5 498 Z" fill="#aab8c0"/><path d="M17.6 538 V532.6 H32 V542.6 H24.5" fill="none" stroke="#aab8c0" stroke-width="1.6"/><rect x="24" y="544" width="5.5" height="1.6" fill="#aab8c0"/><rect x="6.9" y="540.2" width="14.7" height="10" fill="none" stroke="#aab8c0" stroke-width="1.7"/><rect x="12.5" y="550.2" width="3.6" height="3.4" fill="#aab8c0"/><rect x="9.2" y="553.3" width="10.2" height="1.5" fill="#aab8c0"/><path d="M6.8 575.2 A18 18 0 0 1 32 575.2 M9.8 578.5 A13.5 13.5 0 0 1 29 578.5 M12.8 581.8 A9 9 0 0 1 26 581.8 M15.6 585 A5 5 0 0 1 23.2 585" fill="none" stroke="#aab8c0" stroke-width="1.7"/><circle cx="19.4" cy="588.9" r="2.8" fill="#aab8c0"/><path d="M9.5 613 L19.5 608.2 L29.2 613 V624.6 Q29.2 625.6 28.2 625.6 H10.5 Q9.5 625.6 9.5 624.6 Z" fill="none" stroke="#aab8c0" stroke-width="1.7" stroke-linejoin="round"/><path d="M17 614.8 A4.6 4.6 0 1 0 22 614.8" fill="none" stroke="#aab8c0" stroke-width="1.5"/><path d="M19.5 612 V618.5" stroke="#aab8c0" stroke-width="1.5"/><circle cx="14.2" cy="653.7" r="6.6" fill="none" stroke="#aab8c0" stroke-width="1.7"/><path d="M8.5 654.5 L11.5 654.5 L13 651 L15 656.5 L16.5 653.7 L20.5 653.7 H31.5" fill="none" stroke="#aab8c0" stroke-width="1.1"/><path d="M19 657.5 L30.2 661.3" stroke="#aab8c0" stroke-width="2.8" stroke-linecap="round"/><circle cx="19.5" cy="690.6" r="9.6" fill="none" stroke="#aab8c0" stroke-width="1.8" stroke-dasharray="11.3 3.78" transform="rotate(55.7 19.5 690.6)"/><circle cx="19.5" cy="690.6" r="4" fill="#aab8c0"/><path d="M28.2 719.4 V737.7" stroke="#aab8c0" stroke-width="1.6"/><path d="M27.5 719.4 L20 724.3 L27.5 727.5 Z" fill="#aab8c0"/><path d="M10 728.5 H14.5 L17 733 L14.5 737.6 H10 L12.5 733 Z M17.8 728.5 H22.5 L25 733 L22.5 737.6 H17.8 L20.3 733 Z" fill="#aab8c0"/></svg><svg style="position:absolute;left:10px;top:1046px;" width="30" height="30" viewBox="10 1046 30 30"><path d="M15.6 1053.3 L22.8 1052.3 V1059.4 H15.6 Z M23.7 1052.2 L32.3 1051 V1059.4 H23.7 Z M15.6 1060.3 H22.8 V1067.4 L15.6 1066.4 Z M23.7 1060.3 H32.3 V1068.7 L23.7 1067.5 Z" fill="#000"/></svg><svg style="position:absolute;left:55px;top:1048px;" width="26" height="24" viewBox="55 1048 26 24"><circle cx="70.5" cy="1057" r="4.8" fill="none" stroke="#111" stroke-width="1.3"/><path d="M67 1060.5 L60.3 1067.2" stroke="#111" stroke-width="1.4"/></svg><svg style="position:absolute;left:404px;top:1048px;" width="24" height="24" viewBox="404 1048 24 24"><path d="M408 1052.8 V1054.5 H419.5 V1052.8 M408 1067 V1065.3 H419.5 V1067 M409 1055.5 V1064.3 H418.5 V1055.5 Z" fill="none" stroke="#000" stroke-width="1.1"/><rect x="421.5" y="1052" width="1.2" height="2.5" fill="#000"/><rect x="420.7" y="1056" width="2.8" height="3.2" fill="#000"/><rect x="421.5" y="1060.5" width="1.2" height="6.5" fill="#000"/></svg><svg style="position:absolute;left:452px;top:1046px;" width="30" height="28" viewBox="452 1046 30 28"><path d="M456 1051.5 Q456 1050.4 457.2 1050.4 H464 L466 1052.5 H476.6 Q477.8 1052.5 477.8 1053.7 V1067.4 Q477.8 1068.6 476.6 1068.6 H457.2 Q456 1068.6 456 1067.4 Z" fill="#f8d775"/><path d="M456 1051.5 Q456 1050.4 457.2 1050.4 H464 L466 1052.5 H466 V1054 H456 Z" fill="#e0a91a"/><path d="M459.5 1068.6 V1061 Q459.5 1060 460.5 1060 H473.5 Q474.5 1060 474.5 1061 V1068.6 H470.5 V1063.8 H463.5 V1068.6 Z" fill="#3d8ed6"/></svg><div style="position:absolute;left:492px;top:1040px;width:48px;height:40px;background:#ececec"></div><div style="position:absolute;left:492px;top:1078px;width:48px;height:2px;background:#0078d7"></div><svg style="position:absolute;left:500px;top:1044px;" width="32" height="32" viewBox="500 1044 32 32"><defs><linearGradient id="ff1" x1="0.8" y1="0" x2="0.3" y2="1"><stop offset="0" stop-color="#fff44f"/><stop offset="0.35" stop-color="#ffb030"/><stop offset="0.65" stop-color="#ff4a30"/><stop offset="1" stop-color="#e3126a"/></linearGradient><radialGradient id="ff2" cx="0.6" cy="0.3" r="0.8"><stop offset="0" stop-color="#a84df0"/><stop offset="1" stop-color="#4f3ed8"/></radialGradient></defs><path d="M508.2 1052 Q506 1054 505.2 1057.5 A11.2 11.2 0 0 0 527.2 1061 Q527.5 1054.5 523.5 1051 Q521 1049 519.3 1048 Q518.2 1051 516.8 1053.8 Q514 1053 511.5 1054.2 Q510 1052.5 508.2 1052 Z" fill="url(#ff1)"/><circle cx="516" cy="1060.6" r="4.4" fill="url(#ff2)"/><path d="M507.5 1055 Q511 1054.2 514 1056 Q515.5 1056.5 517 1055.8 Q515.5 1058 512.8 1057.8 Q511 1058.5 510.5 1060.5 Q508 1058.5 507.5 1055 Z" fill="#ffa52a"/></svg><svg style="position:absolute;left:550px;top:1046px;" width="30" height="28" viewBox="550 1046 30 28"><rect x="553.3" y="1048.3" width="23" height="23" fill="#29a6df"/><path d="M560 1070 V1050.5 H565.5 Q570.8 1050.5 570.8 1054.8 Q570.8 1059.2 565.5 1059.2 H561.8" fill="none" stroke="#e8f8ff" stroke-width="1.6"/></svg><svg style="position:absolute;left:600px;top:1046px;" width="30" height="28" viewBox="600 1046 30 28"><path d="M602.5 1050.2 L616.2 1047.8 V1071.3 L602.5 1068.8 Z" fill="#0f6cbd"/><rect x="614.5" y="1054" width="10.4" height="11.8" fill="#fff" stroke="#0f6cbd" stroke-width="0.8"/><path d="M615.5 1055.5 L619.7 1059.8 L624 1055.5" fill="none" stroke="#0f6cbd" stroke-width="1.1"/><ellipse cx="609.3" cy="1059.6" rx="3" ry="4" fill="none" stroke="#fff" stroke-width="1.7"/></svg><svg style="position:absolute;left:648px;top:1046px;" width="30" height="28" viewBox="648 1046 30 28"><path d="M652 1050.5 L665 1048.3 V1071.3 L652 1069 Z" fill="#2b579a"/><rect x="664" y="1051" width="9.8" height="17.5" fill="#fff" stroke="#2b579a" stroke-width="0.9"/><path d="M666 1054 H672 M666 1057 H672 M666 1060 H672 M666 1063 H672 M666 1066 H672" stroke="#2b579a" stroke-width="0.9"/><path d="M653.8 1055.5 L655.5 1063.5 L657.6 1057.5 L659.7 1063.5 L661.4 1055.5" fill="none" stroke="#fff" stroke-width="1.3"/></svg><svg style="position:absolute;left:696px;top:1044px;" width="32" height="32" viewBox="696 1044 32 32"><defs><linearGradient id="ed1" x1="0" y1="0.3" x2="1" y2="0.6"><stop offset="0" stop-color="#3cbcf4"/><stop offset="0.5" stop-color="#27c3cf"/><stop offset="1" stop-color="#5fdc5a"/></linearGradient><linearGradient id="ed2" x1="0" y1="0" x2="1" y2="1"><stop offset="0" stop-color="#1b8be4"/><stop offset="1" stop-color="#0b4f9a"/></linearGradient></defs><path d="M700 1058.5 A12.2 12.2 0 0 1 724.2 1059 Q724.2 1062 723 1063.4 L714.5 1064 Q710 1063 710 1060 Q710.5 1057 714 1056.5 Q708 1053 702.5 1055.5 Q700.5 1056.8 700 1058.5 Z" fill="url(#ed1)"/><path d="M700 1058.5 Q700.5 1056.8 702.5 1055.5 Q708 1053 713.5 1056.8 Q710 1057 709.5 1060.5 Q709.8 1064.5 715 1066 Q719 1066.8 722.5 1065.8 Q718.5 1071.8 711.5 1072 Q704.5 1071.8 701.5 1066.5 Q699.8 1063 700 1058.5 Z" fill="url(#ed2)"/><ellipse cx="712" cy="1060.8" rx="2.4" ry="3.4" fill="#dcdcdc"/></svg><svg style="position:absolute;left:746px;top:1046px;" width="30" height="28" viewBox="746 1046 30 28"><rect x="748.9" y="1047.8" width="23.9" height="24" fill="#1f4fb0"/><path d="M754.5 1052 H762 V1056.5 L764.5 1054 Q766 1051.5 768 1050.5 Q766.5 1054 765 1056 L762 1057.5 V1066.5 H754.5 Z" fill="#fff"/><path d="M754.5 1060 H762" stroke="#1f4fb0" stroke-width="0.8"/><rect x="755" y="1053" width="5" height="1" fill="#1f4fb0"/></svg><svg style="position:absolute;left:1700px;top:1046px;" width="200" height="30" viewBox="1700 1046 200 30"><path d="M1711 1062.5 L1716.8 1056.5 L1722.6 1062.5" fill="none" stroke="#111" stroke-width="1.1"/><path d="M1739 1054.5 A6.5 6.5 0 0 1 1745.5 1054.5 M1739 1065 A6.5 6.5 0 0 0 1745.5 1065" fill="none" stroke="#111" stroke-width="1"/><rect x="1736.8" y="1055.5" width="7" height="7.5" rx="1.5" fill="none" stroke="#111" stroke-width="1.1"/><path d="M1743.8 1057.5 L1746.8 1056 V1062.5 L1743.8 1061" fill="none" stroke="#111" stroke-width="1"/><rect x="1759.2" y="1054.4" width="13.3" height="9.5" fill="none" stroke="#111" stroke-width="1.1"/><path d="M1763 1063.9 V1066.5 M1760.5 1066.5 H1769" stroke="#111" stroke-width="1.1"/><rect x="1757.2" y="1054" width="4.5" height="3.8" fill="#d9d8d8" stroke="#111" stroke-width="0.9"/><path d="M1758.7 1057.8 V1061.5" stroke="#111" stroke-width="0.9"/><path d="M1781.2 1057.3 H1783.5 L1787.3 1053.6 V1065.6 L1783.5 1061.9 H1781.2 Z" fill="none" stroke="#111" stroke-width="1.1"/><path d="M1789.5 1057.3 A3 3 0 0 1 1789.5 1062 M1791.8 1055.5 A5.6 5.6 0 0 1 1791.8 1063.8 M1794.1 1053.6 A8.3 8.3 0 0 1 1794.1 1065.6" fill="none" stroke="#111" stroke-width="1.1"/><path d="M1879 1052 H1895 V1064.5 H1889.2 L1887 1067.3 L1884.8 1064.5 H1879 Z" fill="#000"/><path d="M1881.8 1055.5 H1892.2 M1881.8 1058.3 H1892.2 M1881.8 1061 H1888.5" stroke="#fff" stroke-width="1"/></svg><div style="position:absolute;left:1915px;top:1040px;width:1px;height:40px;background:#b8b8b8"></div><svg style="position:absolute;left:1900px;top:74px;" width="20" height="966" viewBox="1900 74 20 966"><path d="M1908 85 L1911.5 81.3 L1915 85" fill="none" stroke="#505050" stroke-width="2"/><path d="M1908 1029.5 L1911.5 1033.2 L1915 1029.5" fill="none" stroke="#505050" stroke-width="2"/></svg>
</body></html>
